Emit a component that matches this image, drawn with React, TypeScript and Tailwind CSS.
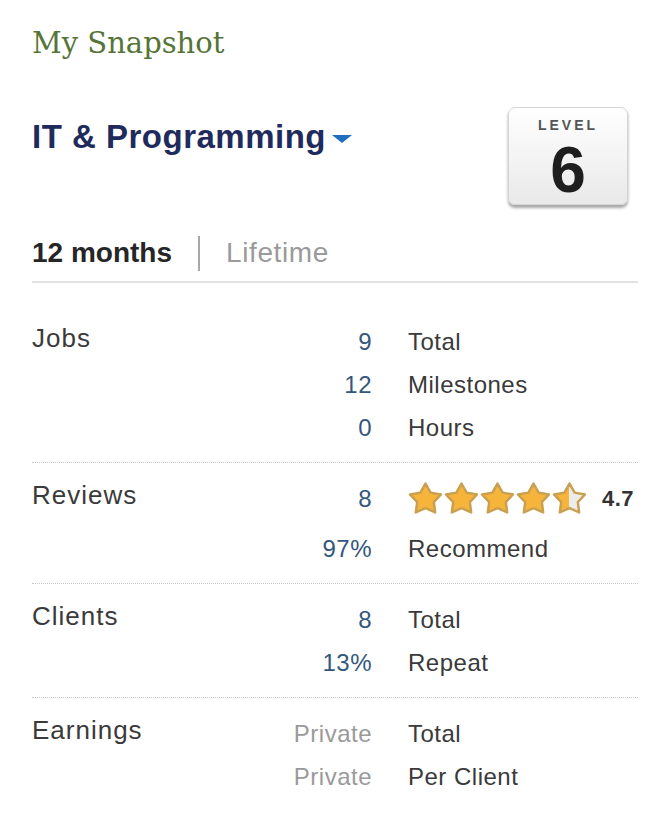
import React from "react";

const sans = { fontFamily: '"Liberation Sans", Arial, sans-serif' };

function Star({ fill = 1, id }: { fill?: number; id: string }) {
  const d =
    "M17 1.5 L22 10.3 L32 12.1 L25.1 19.6 L26.4 29.6 L17 25.3 L7.6 29.6 L8.9 19.6 L2 12.1 L12 10.3 Z";
  return (
    <svg width="35" height="33" viewBox="0 0 34 32">
      <defs>
        <linearGradient id={id} x1="0" x2="1" y1="0" y2="0">
          <stop offset={fill} stopColor="#f7b43a" />
          <stop offset={fill} stopColor="#ececec" />
        </linearGradient>
      </defs>
      <path
        d={d}
        fill={`url(#${id})`}
        stroke="#c9a050"
        strokeWidth="2.4"
        strokeLinejoin="round"
      />
    </svg>
  );
}

function Line({
  value,
  label,
  muted,
  children,
}: {
  value: string;
  label?: string;
  muted?: boolean;
  children?: React.ReactNode;
}) {
  return (
    <div className="flex h-[43px] items-center text-[24px] tracking-[0.5px]">
      <div
        className={
          "w-[90px] text-right " + (muted ? "text-[#9a9a9a]" : "text-[#34577c]")
        }
      >
        {value}
      </div>
      <div className="ml-[36px] flex items-center text-[#3a3a3a]">
        {children ?? label}
      </div>
    </div>
  );
}

function Section({
  title,
  children,
  first,
  last,
}: {
  title: string;
  children: React.ReactNode;
  first?: boolean;
  last?: boolean;
}) {
  return (
    <div
      className={
        "flex " +
        (first ? "pt-[37px] " : "pt-[14px] ") +
        (last ? "pb-[14px]" : "pb-[13px] border-b border-dotted border-[#c8c8c8]")
      }
    >
      <div className="w-[250px] text-[26px] leading-[43px] tracking-[1px] text-[#3a3a3a] -mt-[3px]">
        {title}
      </div>
      <div className="flex flex-col">{children}</div>
    </div>
  );
}

export default function App() {
  return (
    <div className="w-[664px] h-[815px] bg-white pl-[32px] pr-[26px] pt-[25px]" style={sans}>
      <h1
        className="text-[29px] leading-[36px] text-[#567437]"
        style={{ fontFamily: '"DejaVu Serif", Georgia, serif' }}
      >
        My Snapshot
      </h1>

      {/* HEADER */}
      <div className="mt-[46px] flex items-start justify-between">
        <div className="mt-[10px] flex items-center text-[33px] leading-[40px] font-bold tracking-[0.5px] text-[#1f2b5c]">
          IT &amp; Programming
          <svg width="22" height="10" viewBox="0 0 22 10" className="ml-[5px] mt-[4px]">
            <path d="M1 1 L21 1 L11 9 Z" fill="#1f6ec4" />
          </svg>
        </div>

        <div className="mr-[10px] flex h-[98px] w-[120px] flex-col items-center rounded-[7px] border border-[#d4d4d4] bg-gradient-to-b from-white to-[#e9e9e9] shadow-[0_3px_3px_rgba(0,0,0,0.35)]">
          <div className="mt-[8px] text-[14px] font-bold leading-[18px] tracking-[3px] text-[#555]">
            LEVEL
          </div>
          <div className="mt-[4px] text-[64px] font-bold leading-[64px] text-[#1e1e1e]">6</div>
        </div>
      </div>

      {/* TABS */}
      <div className="mt-[30px] flex items-center border-b-2 border-[#e2e2e2] pb-[10px]">
        <span className="text-[28px] font-bold leading-[36px] text-[#262626]">12 months</span>
        <span className="mx-[26px] h-[35px] w-[2px] bg-[#a8a8a8]" />
        <span className="text-[28px] leading-[36px] tracking-[0.6px] text-[#9a9a9a]">Lifetime</span>
      </div>

      {/* STATS */}
      <Section title="Jobs" first>
        <Line value="9" label="Total" />
        <Line value="12" label="Milestones" />
        <Line value="0" label="Hours" />
      </Section>

      <Section title="Reviews">
        <Line value="8">
          <div className="flex gap-[1px]">
            <Star id="s1" />
            <Star id="s2" />
            <Star id="s3" />
            <Star id="s4" />
            <Star id="s5" fill={0.5} />
          </div>
          <span className="ml-[15px] text-[22px] font-bold text-[#333]">4.7</span>
        </Line>
        <div className="mt-[7px]">
          <Line value="97%" label="Recommend" />
        </div>
      </Section>

      <Section title="Clients">
        <Line value="8" label="Total" />
        <Line value="13%" label="Repeat" />
      </Section>

      <Section title="Earnings" last>
        <Line value="Private" label="Total" muted />
        <Line value="Private" label="Per Client" muted />
      </Section>
    </div>
  );
}
